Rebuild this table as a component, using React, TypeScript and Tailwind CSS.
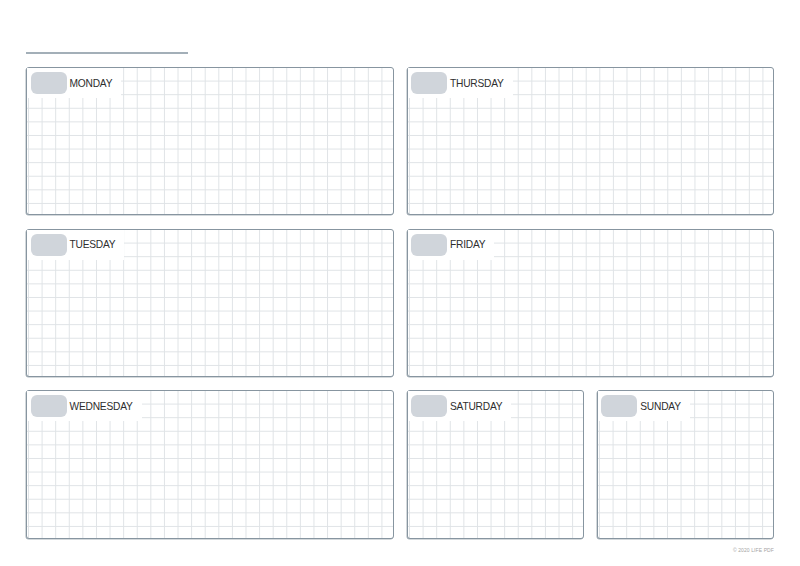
const grid =
  "bg-white bg-[linear-gradient(to_right,#dfe3e6_1px,transparent_1px),linear-gradient(to_bottom,#dfe3e6_1px,transparent_1px)] bg-[size:13.6px_13.6px] bg-[position:1px_-1px]";

function DayPanel({ day, className = "" }: { day: string; className?: string }) {
  return (
    <div
      className={`relative h-full rounded-[3px] border-[1.5px] border-[#8795a0] shadow-[-0.5px_0.5px_0_#a9b3ba] ${grid} ${className}`}
    >
      <div className="flex w-fit items-center gap-[3px] bg-white pt-[4px] pb-[4px] pl-[3.5px] pr-[9px]">
        <div className="h-[22px] w-[36px] rounded-[6px] bg-[#d0d5db]" />
        <span className="mt-[2px] text-[10.2px] tracking-[-0.2px] text-[#2e2e2e] leading-none">
          {day}
        </span>
      </div>
    </div>
  );
}

export default function App() {
  return (
    <div
      className="relative h-[566px] w-[800px] bg-white px-[26px] pt-[52px]"
      style={{ fontFamily: '"Liberation Sans", Arial, sans-serif' }}
    >
      <div className="h-[2px] w-[162px] bg-[#a3afb8]" />

      <div className="mt-[13px] flex flex-col gap-[13.5px]">
        <div className="grid h-[148px] grid-cols-2 gap-[13px]">
          <DayPanel day="MONDAY" />
          <DayPanel day="THURSDAY" />
        </div>
        <div className="grid h-[148px] grid-cols-2 gap-[13px]">
          <DayPanel day="TUESDAY" />
          <DayPanel day="FRIDAY" />
        </div>
        <div className="grid h-[149px] grid-cols-2 gap-[13px]">
          <DayPanel day="WEDNESDAY" />
          <div className="grid grid-cols-2 gap-[13px]">
            <DayPanel day="SATURDAY" />
            <DayPanel day="SUNDAY" />
          </div>
        </div>
      </div>

      <div className="mt-[9px] text-right text-[5px] leading-none tracking-[0.1px] text-[#a4a4a4]">
        © 2020 LIFE PDF
      </div>
    </div>
  );
}
